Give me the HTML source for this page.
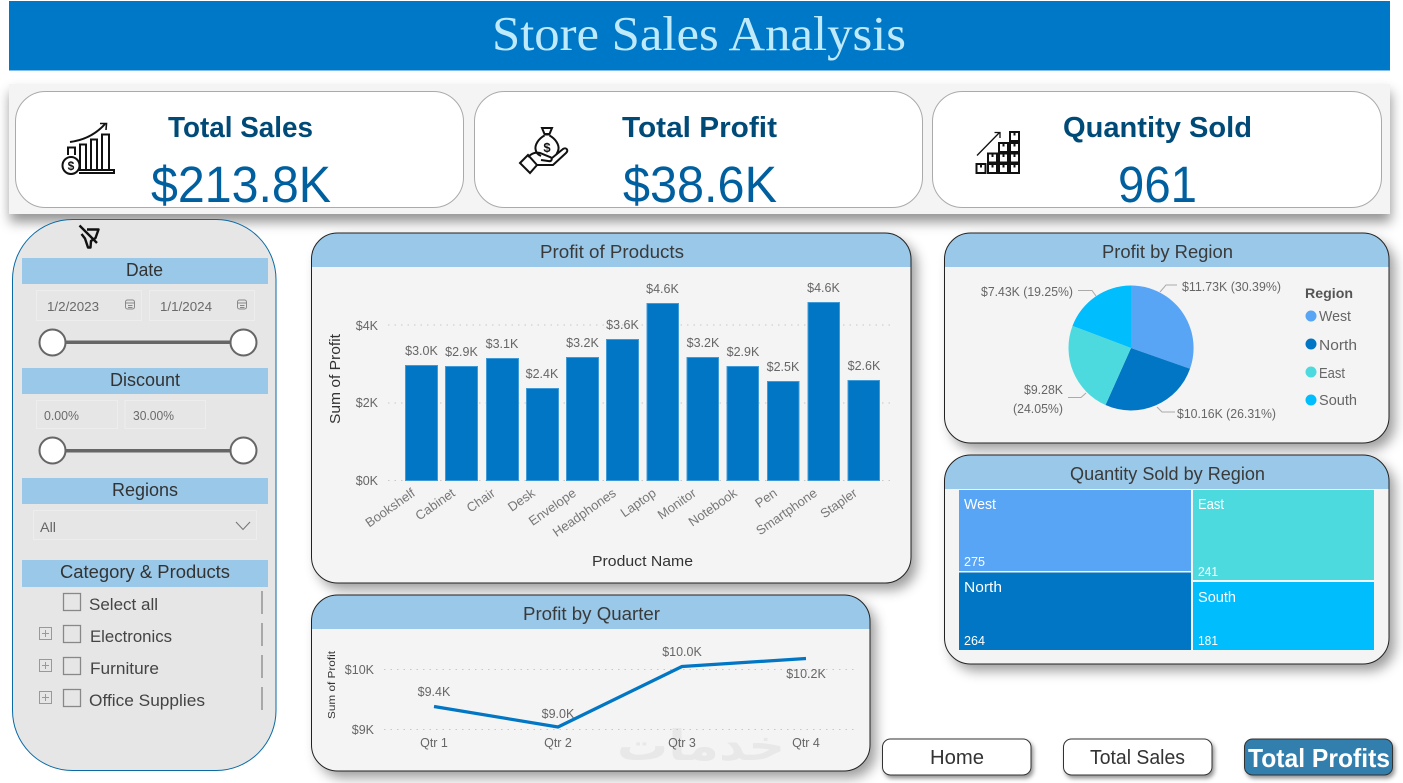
<!DOCTYPE html>
<html lang="en"><head><meta charset="utf-8"><title>Store Sales Analysis</title>
<style>
html,body{margin:0;padding:0;background:#fff;width:1403px;height:783px;overflow:hidden}
svg{display:block}
text{font-family:"Liberation Sans",sans-serif}
.h{fill:#333;font-size:18px}
.t{fill:#3a3a3a;font-size:18px}
.a{fill:#666;font-size:12.5px}
.k{fill:#004a78;font-size:29px;font-weight:bold}
.v{fill:#005f9e;font-size:51px}
.w{fill:#fff;font-size:15px}
.n{fill:#fff;font-size:13px}
.f{fill:#444;font-size:17px}
.i{fill:#6a6a6a;font-size:13px}
.l{fill:#666;font-size:14.5px}
.card{fill:#f4f4f4}
.kc{fill:#fff;stroke:#aaa;stroke-width:1}
.ic{fill:none;stroke:#111;stroke-width:2}
.g{stroke:#c8c8c8;stroke-width:1;stroke-dasharray:1.5 5}
.ll{fill:none;stroke:#aaa;stroke-width:1}
.b{fill:#0076c4;stroke:#3f9bd8;stroke-width:1}
</style></head><body>
<svg width="1403" height="783" viewBox="0 0 1403 783" xmlns="http://www.w3.org/2000/svg">
<defs>
<filter id="s1" x="-5%" y="-20%" width="110%" height="160%"><feDropShadow dx="1" dy="8" stdDeviation="6" flood-color="#000" flood-opacity=".42"/></filter>
<filter id="s2" x="-5%" y="-5%" width="112%" height="118%"><feDropShadow dx="6" dy="7" stdDeviation="6" flood-color="#000" flood-opacity=".38"/></filter>
<filter id="s3" x="-10%" y="-20%" width="120%" height="150%"><feDropShadow dx="2" dy="3" stdDeviation="2" flood-color="#000" flood-opacity=".42"/></filter>
<clipPath id="c1"><rect x="311.500" y="233" width="599.500" height="350" rx="26"/></clipPath>
<clipPath id="c2"><rect x="944.500" y="233" width="444.500" height="210" rx="26"/></clipPath>
<clipPath id="c3"><rect x="944.500" y="455" width="444.500" height="209" rx="26"/></clipPath>
<clipPath id="c4"><rect x="311.500" y="595" width="558.500" height="176" rx="26"/></clipPath>
</defs>

<!-- Header -->
<rect x="9" y="1" width="1381" height="69" fill="#0078c8"/>
<rect x="9" y="70" width="1381" height="1" fill="#7fbfea"/>
<text x="492" y="50" textLength="414" lengthAdjust="spacingAndGlyphs" style="font-family:'Liberation Serif',serif;font-size:49px;fill:#bfeafc">Store Sales Analysis</text>

<!-- KPI band -->
<rect x="9" y="84" width="1381" height="130" fill="#f4f4f4" filter="url(#s1)"/>
<rect class="kc" x="15.500" y="91.500" width="448" height="116" rx="30"/>
<rect class="kc" x="474.500" y="91.500" width="448" height="116" rx="30"/>
<rect class="kc" x="932.500" y="91.500" width="449" height="116" rx="30"/>
<text class="k" x="168" y="137" textLength="145" lengthAdjust="spacingAndGlyphs">Total Sales</text>
<text class="v" x="151" y="202" textLength="180" lengthAdjust="spacingAndGlyphs">$213.8K</text>
<text class="k" x="622" y="137" textLength="155" lengthAdjust="spacingAndGlyphs">Total Profit</text>
<text class="v" x="623" y="202" textLength="154" lengthAdjust="spacingAndGlyphs">$38.6K</text>
<text class="k" x="1063" y="137" textLength="189" lengthAdjust="spacingAndGlyphs">Quantity Sold</text>
<text class="v" x="1118" y="202" textLength="79" lengthAdjust="spacingAndGlyphs">961</text>

<!-- Sales icon -->
<g class="ic">
<path d="M70 142C85 140 97 133 105 124"/><path d="M100 123.500L106.500 123.500L106 130" stroke-width="1.600"/>
<path d="M68 155V147.500H75V155"/>
<path d="M80 169V144.500H86V169M91 169V139.500H97V169M102 169V134.500H109V169"/>
<path d="M79 170H114V173H79"/>
<circle cx="71" cy="165.500" r="8.500"/>
</g>
<text x="71" y="170" text-anchor="middle" style="font-size:12px;font-weight:bold;fill:#111">$</text>

<!-- Money hand icon -->
<g class="ic">
<path d="M542 128H552L549.500 134H544.500Z"/><path d="M544 134.500H550"/>
<path d="M544.500 135.500C538 139 535 145 535.500 149C536 153 538.500 155 541 156M549.500 135.500C556 139 559 145 558.500 149C558.300 151 557.500 152.500 556.500 154"/>
<path d="M520 163L528 155L537 165L530 173Z"/>
<path d="M528 157C532 153 536 152 540 153L550 157C553 158 552 162 548 161L541 160"/>
<path d="M552 158L563 149C566 147 569 150 566 153L553 165H537"/>
</g>
<text x="547" y="152" text-anchor="middle" style="font-size:13px;font-weight:bold;fill:#111">$</text>

<!-- Boxes icon -->
<path d="M977 155.500L999.500 132.500M994.500 132.500H1000V138" fill="none" stroke="#111" stroke-width="1.300"/>
<g fill="none" stroke="#111" stroke-width="2">
<rect x="976.500" y="164" width="9" height="9"/><rect x="988" y="164" width="9" height="9"/><rect x="999" y="164" width="9" height="9"/><rect x="1010" y="164" width="9" height="9"/>
<rect x="988" y="153.500" width="9" height="9"/><rect x="999" y="153.500" width="9" height="9"/><rect x="1010" y="153.500" width="9" height="9"/>
<rect x="999" y="143" width="9" height="9"/><rect x="1010" y="143" width="9" height="9"/>
<rect x="1010" y="132" width="9" height="9"/>
</g>
<g fill="#111"><rect x="980" y="164" width="2" height="3.500"/><rect x="991.500" y="164" width="2" height="3.500"/><rect x="1002.500" y="164" width="2" height="3.500"/><rect x="1013.500" y="164" width="2" height="3.500"/><rect x="991.500" y="153.500" width="2" height="3.500"/><rect x="1002.500" y="153.500" width="2" height="3.500"/><rect x="1013.500" y="153.500" width="2" height="3.500"/><rect x="1002.500" y="143" width="2" height="3.500"/><rect x="1013.500" y="143" width="2" height="3.500"/><rect x="1013.500" y="132" width="2" height="3.500"/></g>

<!-- Filter panel -->
<rect x="12.500" y="219.500" width="263.500" height="551" rx="60" fill="#e6e6e6" stroke="#0a6aa5" stroke-width="1"/>
<g fill="none" stroke="#111" stroke-width="2.400" stroke-linejoin="round"><path d="M87 229.500H98.500L95.500 238L91 241L90.500 247.500H88L85 238.500L81.500 234"/><path d="M79.500 225.500L97 243"/></g>
<g fill="#99c8e8">
<rect x="22" y="258" width="246" height="26"/><rect x="22" y="368" width="246" height="26"/><rect x="22" y="478" width="246" height="26"/><rect x="22" y="560" width="246" height="27"/>
</g>
<text class="h" x="126" y="276" textLength="37" lengthAdjust="spacingAndGlyphs">Date</text>
<text class="h" x="110" y="386" textLength="70" lengthAdjust="spacingAndGlyphs">Discount</text>
<text class="h" x="112" y="496" textLength="66" lengthAdjust="spacingAndGlyphs">Regions</text>
<text class="h" x="60" y="578" textLength="170" lengthAdjust="spacingAndGlyphs">Category &amp; Products</text>

<g fill="none" stroke="#ededed" stroke-width="1">
<rect x="36.500" y="290.500" width="105" height="30"/><rect x="149.500" y="290.500" width="105" height="30"/>
<rect x="36.500" y="400.500" width="81" height="28"/><rect x="125" y="400.500" width="80.500" height="28"/>
<rect x="33.500" y="510.500" width="223" height="29"/>
</g>
<text class="i" x="47" y="311" textLength="52" lengthAdjust="spacingAndGlyphs">1/2/2023</text>
<text class="i" x="160" y="311" textLength="52" lengthAdjust="spacingAndGlyphs">1/1/2024</text>
<text class="i" x="44" y="420" textLength="35" lengthAdjust="spacingAndGlyphs">0.00%</text>
<text class="i" x="133" y="420" textLength="41" lengthAdjust="spacingAndGlyphs">30.00%</text>
<text x="40" y="532" textLength="16" lengthAdjust="spacingAndGlyphs" style="font-size:14px;fill:#666">All</text>
<g fill="none" stroke="#888" stroke-width="1">
<rect x="125.500" y="300" width="9" height="9" rx="2"/><path d="M125.500 303H134.500M128 305.500H132.500M128 307.500H132.500"/>
<rect x="237.500" y="300" width="9" height="9" rx="2"/><path d="M237.500 303H246.500M240 305.500H244.500M240 307.500H244.500"/>
</g>
<path d="M236 522L243 529.500L250 522" fill="none" stroke="#777" stroke-width="1.100"/>

<rect x="52" y="340.500" width="192" height="3.500" fill="#666"/>
<circle cx="52.500" cy="342.500" r="13" fill="#fff" stroke="#666" stroke-width="2"/>
<circle cx="243.500" cy="342.500" r="13" fill="#fff" stroke="#666" stroke-width="2"/>
<rect x="52" y="449" width="192" height="3.500" fill="#666"/>
<circle cx="52.500" cy="450.500" r="13" fill="#fff" stroke="#666" stroke-width="2"/>
<circle cx="243.500" cy="450.500" r="13" fill="#fff" stroke="#666" stroke-width="2"/>

<g fill="none" stroke="#888" stroke-width="1.300">
<rect x="63.500" y="593.500" width="17" height="17"/><rect x="63.500" y="625.500" width="17" height="17"/><rect x="63.500" y="657.500" width="17" height="17"/><rect x="63.500" y="689.500" width="17" height="17"/>
</g>
<g fill="none" stroke="#999" stroke-width="1">
<rect x="39.500" y="627.500" width="12" height="12"/><path d="M42 633.500H49M45.500 630V637"/>
<rect x="39.500" y="659.500" width="12" height="12"/><path d="M42 665.500H49M45.500 662V669"/>
<rect x="39.500" y="691.500" width="12" height="12"/><path d="M42 697.500H49M45.500 694V701"/>
</g>
<g stroke="#888" stroke-width="1.300"><path d="M262 591V614M262 623V646M262 655V678M262 687V710"/></g>
<text class="f" x="89" y="610" textLength="69" lengthAdjust="spacingAndGlyphs">Select all</text>
<text class="f" x="90" y="642" textLength="82" lengthAdjust="spacingAndGlyphs">Electronics</text>
<text class="f" x="90" y="674" textLength="69" lengthAdjust="spacingAndGlyphs">Furniture</text>
<text class="f" x="89" y="706" textLength="116" lengthAdjust="spacingAndGlyphs">Office Supplies</text>

<!-- Bar chart card -->
<rect class="card" x="311.500" y="233" width="599.500" height="350" rx="26" filter="url(#s2)"/>
<rect x="311" y="233" width="600" height="34" fill="#99c8e8" clip-path="url(#c1)"/>
<rect x="311.500" y="233" width="599.500" height="350" rx="26" fill="none" stroke="#222" stroke-width="1"/>
<text class="t" x="540" y="258" textLength="144" lengthAdjust="spacingAndGlyphs">Profit of Products</text>
<path class="g" d="M388 325H892M388 403H892M388 480.500H892"/>
<text class="a" x="378" y="330" text-anchor="end">$4K</text>
<text class="a" x="378" y="407" text-anchor="end">$2K</text>
<text class="a" x="378" y="485" text-anchor="end">$0K</text>
<rect class="b" x="405.500" y="365.500" width="32" height="115"/>
<rect class="b" x="445.500" y="366.500" width="32" height="114"/>
<rect class="b" x="486.500" y="358.500" width="32" height="122"/>
<rect class="b" x="526.500" y="388.500" width="32" height="92"/>
<rect class="b" x="566.500" y="357.500" width="32" height="123"/>
<rect class="b" x="606.500" y="339.500" width="32" height="141"/>
<rect class="b" x="647" y="303.500" width="31.500" height="177"/>
<rect class="b" x="687" y="357.500" width="31.500" height="123"/>
<rect class="b" x="727" y="366.500" width="31.500" height="114"/>
<rect class="b" x="767.500" y="381.500" width="31.500" height="99"/>
<rect class="b" x="808" y="302.500" width="31.500" height="178"/>
<rect class="b" x="848" y="380.500" width="31.500" height="100"/>
<g text-anchor="middle" class="a">
<text class="a" x="421.500" y="355">$3.0K</text><text class="a" x="461.500" y="356">$2.9K</text><text class="a" x="502" y="348">$3.1K</text><text class="a" x="542" y="378">$2.4K</text><text class="a" x="582.500" y="347">$3.2K</text><text class="a" x="622.500" y="329">$3.6K</text><text class="a" x="662.500" y="293">$4.6K</text><text class="a" x="703" y="347">$3.2K</text><text class="a" x="743" y="356">$2.9K</text><text class="a" x="783" y="371">$2.5K</text><text class="a" x="823.500" y="292">$4.6K</text><text class="a" x="864" y="370">$2.6K</text>
</g>
<g text-anchor="end" style="font-size:13px" fill="#777">
<text transform="translate(416 495) rotate(-35)">Bookshelf</text>
<text transform="translate(456 495) rotate(-35)">Cabinet</text>
<text transform="translate(496 495) rotate(-35)">Chair</text>
<text transform="translate(536 495) rotate(-35)">Desk</text>
<text transform="translate(577 495) rotate(-35)">Envelope</text>
<text transform="translate(617 495) rotate(-35)">Headphones</text>
<text transform="translate(657 495) rotate(-35)">Laptop</text>
<text transform="translate(697 495) rotate(-35)">Monitor</text>
<text transform="translate(738 495) rotate(-35)">Notebook</text>
<text transform="translate(778 495) rotate(-35)">Pen</text>
<text transform="translate(818 495) rotate(-35)">Smartphone</text>
<text transform="translate(858 495) rotate(-35)">Stapler</text>
</g>
<text transform="translate(340 424) rotate(-90)" textLength="90" lengthAdjust="spacingAndGlyphs" style="font-size:14.500px;fill:#333">Sum of Profit</text>
<text x="592" y="566" textLength="101" lengthAdjust="spacingAndGlyphs" style="font-size:14.500px;fill:#333">Product Name</text>

<!-- Pie card -->
<rect class="card" x="944.500" y="233" width="444.500" height="210" rx="26" filter="url(#s2)"/>
<rect x="944" y="233" width="445" height="34" fill="#99c8e8" clip-path="url(#c2)"/>
<rect x="944.500" y="233" width="444.500" height="210" rx="26" fill="none" stroke="#222" stroke-width="1"/>
<text class="t" x="1102" y="258" textLength="131" lengthAdjust="spacingAndGlyphs">Profit by Region</text>
<path d="M1131 348V285.500A62.500 62.500 0 0 1 1190 368.800Z" fill="#58a4f5"/>
<path d="M1131 348L1190 368.800A62.500 62.500 0 0 1 1105.500 405Z" fill="#0076c4"/>
<path d="M1131 348L1105.500 405A62.500 62.500 0 0 1 1072.500 325.900Z" fill="#4ddadf"/>
<path d="M1131 348L1072.500 325.900A62.500 62.500 0 0 1 1131 285.500Z" fill="#00bdfe"/>
<path class="ll" d="M1160 292L1166 285H1177M1078 290.500H1092L1096 296M1068 397.500H1081L1086 393M1157 407L1162 412H1175"/>
<text class="a" x="1182" y="291" textLength="99" lengthAdjust="spacingAndGlyphs">$11.73K (30.39%)</text>
<text class="a" x="981" y="296" textLength="92" lengthAdjust="spacingAndGlyphs">$7.43K (19.25%)</text>
<text class="a" x="1024" y="394" textLength="39" lengthAdjust="spacingAndGlyphs">$9.28K</text>
<text class="a" x="1013" y="413" textLength="50" lengthAdjust="spacingAndGlyphs">(24.05%)</text>
<text class="a" x="1177" y="418" textLength="99" lengthAdjust="spacingAndGlyphs">$10.16K (26.31%)</text>
<text x="1305" y="298" textLength="48" lengthAdjust="spacingAndGlyphs" style="font-size:14px;font-weight:bold;fill:#555">Region</text>
<circle cx="1311" cy="316" r="5.500" fill="#58a4f5"/><circle cx="1311" cy="344" r="5.500" fill="#0076c4"/><circle cx="1311" cy="372" r="5.500" fill="#4ddadf"/><circle cx="1311" cy="400" r="5.500" fill="#00bdfe"/>
<text class="l" x="1319" y="321" textLength="32" lengthAdjust="spacingAndGlyphs">West</text>
<text class="l" x="1319" y="350" textLength="38" lengthAdjust="spacingAndGlyphs">North</text>
<text class="l" x="1319" y="378" textLength="26" lengthAdjust="spacingAndGlyphs">East</text>
<text class="l" x="1319" y="405" textLength="38" lengthAdjust="spacingAndGlyphs">South</text>

<!-- Treemap card -->
<rect class="card" x="944.500" y="455" width="444.500" height="209" rx="26" filter="url(#s2)"/>
<rect x="944" y="455" width="445" height="34" fill="#99c8e8" clip-path="url(#c3)"/>
<rect x="944.500" y="455" width="444.500" height="209" rx="26" fill="none" stroke="#222" stroke-width="1"/>
<text class="t" x="1070" y="480" textLength="195" lengthAdjust="spacingAndGlyphs">Quantity Sold by Region</text>
<rect x="959" y="490" width="232" height="81" fill="#58a4f5"/>
<rect x="959" y="572.500" width="232" height="77.500" fill="#0076c4"/>
<rect x="1193" y="490" width="181" height="90" fill="#4ddadf"/>
<rect x="1193" y="582" width="181" height="68" fill="#00bdfe"/>
<text class="w" x="964" y="509" textLength="32" lengthAdjust="spacingAndGlyphs">West</text>
<text class="n" x="964" y="566" textLength="21" lengthAdjust="spacingAndGlyphs">275</text>
<text class="w" x="964" y="592" textLength="38" lengthAdjust="spacingAndGlyphs">North</text>
<text class="n" x="964" y="645" textLength="21" lengthAdjust="spacingAndGlyphs">264</text>
<text class="w" x="1198" y="509" textLength="26" lengthAdjust="spacingAndGlyphs">East</text>
<text class="n" x="1198" y="576" textLength="20" lengthAdjust="spacingAndGlyphs">241</text>
<text class="w" x="1198" y="602" textLength="38" lengthAdjust="spacingAndGlyphs">South</text>
<text class="n" x="1198" y="645" textLength="20" lengthAdjust="spacingAndGlyphs">181</text>

<!-- Quarter card -->
<rect class="card" x="311.500" y="595" width="558.500" height="176" rx="26" filter="url(#s2)"/>
<rect x="311" y="595" width="559" height="34" fill="#99c8e8" clip-path="url(#c4)"/>
<rect x="311.500" y="595" width="558.500" height="176" rx="26" fill="none" stroke="#222" stroke-width="1"/>
<text class="t" x="523" y="620" textLength="137" lengthAdjust="spacingAndGlyphs">Profit by Quarter</text>
<text x="617" y="760" textLength="168" lengthAdjust="spacingAndGlyphs" style="font-family:'DejaVu Sans',sans-serif;font-size:42px;font-weight:bold;fill:#e8e8e8">خدمات</text>
<path class="g" d="M384 669.500H854M384 729.500H854"/>
<text class="a" x="374" y="674" text-anchor="end">$10K</text>
<text class="a" x="374" y="734" text-anchor="end">$9K</text>
<path d="M434 706.500L558 727L682 666.500L806 658.500" fill="none" stroke="#0076c4" stroke-width="3.200" stroke-linejoin="round"/>
<g>
<text class="a" x="434" y="696" text-anchor="middle">$9.4K</text>
<text class="a" x="558" y="718" text-anchor="middle">$9.0K</text>
<text class="a" x="682" y="656" text-anchor="middle">$10.0K</text>
<text class="a" x="806" y="678" text-anchor="middle">$10.2K</text>
<text class="a" x="434" y="747" text-anchor="middle">Qtr 1</text>
<text class="a" x="558" y="747" text-anchor="middle">Qtr 2</text>
<text class="a" x="682" y="747" text-anchor="middle">Qtr 3</text>
<text class="a" x="806" y="747" text-anchor="middle">Qtr 4</text>
</g>
<text transform="translate(335 719) rotate(-90)" textLength="68" lengthAdjust="spacingAndGlyphs" style="font-size:10.500px;fill:#333">Sum of Profit</text>

<!-- Buttons -->
<rect x="882.500" y="739" width="148.500" height="36" rx="8" fill="#fff" stroke="#333" stroke-width="1" filter="url(#s3)"/>
<rect x="1063.500" y="739" width="148.500" height="36" rx="8" fill="#fff" stroke="#333" stroke-width="1" filter="url(#s3)"/>
<rect x="1244.500" y="739" width="148" height="36" rx="8" fill="#337fae" stroke="#333" stroke-width="1" filter="url(#s3)"/>
<text x="930" y="764" textLength="54" lengthAdjust="spacingAndGlyphs" style="font-size:20px;fill:#333">Home</text>
<text x="1090" y="764" textLength="95" lengthAdjust="spacingAndGlyphs" style="font-size:20px;fill:#333">Total Sales</text>
<text x="1248" y="767" textLength="142" lengthAdjust="spacingAndGlyphs" style="font-size:26px;font-weight:bold;fill:#fff">Total Profits</text>
</svg>
</body></html>
